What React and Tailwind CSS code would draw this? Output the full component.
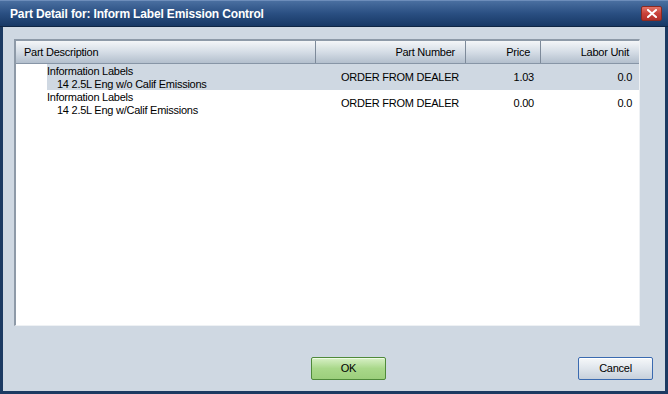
import React from "react";

const rows = [
  { title: "Information Labels", sub: "14 2.5L Eng w/o Calif Emissions", part: "ORDER FROM DEALER", price: "1.03", labor: "0.0", selected: true },
  { title: "Information Labels", sub: "14 2.5L Eng w/Calif Emissions", part: "ORDER FROM DEALER", price: "0.00", labor: "0.0", selected: false },
];

const App = () => {
  return (
    <div className="w-[668px] h-[394px] flex flex-col bg-[#1c3a62] text-[11px] tracking-[-0.25px] text-black" style={{ fontFamily: '"Liberation Sans", Arial, sans-serif' }}>
      {/* Title bar */}
      <div className="h-[27px] flex items-center justify-between pl-[10px] pr-[6px] bg-gradient-to-b from-[#4a6fa0] via-[#2a4f82] to-[#173865] border-t border-[#6d8dba] border-b border-b-[#0f2544]">
        <span className="text-white font-bold text-[12px] tracking-[-0.15px]">Part Detail for: Inform Label Emission Control</span>
        <div className="w-[21px] h-[15px] mt-[-1px] rounded-[2px] border border-[#8a2a22] bg-gradient-to-b from-[#e27468] via-[#c9423a] to-[#b3302a] flex items-center justify-center">
          <svg width="10" height="9" viewBox="0 0 10 9">
            <path d="M1 1 L9 8 M9 1 L1 8" stroke="white" strokeWidth="2" strokeLinecap="square" />
          </svg>
        </div>
      </div>

      {/* Body */}
      <div className="flex-1 mx-[3px] mb-[3px] bg-[#cfd8e2] flex flex-col px-[11px] pt-[12px]">
        {/* List */}
        <div className="w-[626px] h-[287px] bg-white border-t-2 border-l-2 border-[#8e9aa8] border-b border-r border-b-[#eef1f4] border-r-[#eef1f4] flex flex-col">
          {/* Header */}
          <div className="h-[23px] flex bg-gradient-to-b from-[#f4f6f8] via-[#d5dde6] to-[#b3bfcd] border-b border-[#8795a6]">
            <div className="w-[300px] flex items-center pl-[8px] border-r border-[#7d8a9a]">Part Description</div>
            <div className="w-[150px] flex items-center justify-end pr-[10px] border-r border-[#7d8a9a]">Part Number</div>
            <div className="w-[75px] flex items-center justify-end pr-[10px] border-r border-[#7d8a9a]">Price</div>
            <div className="flex-1 flex items-center justify-end pr-[10px]">Labor Unit</div>
          </div>
          {/* Rows */}
          {rows.map((r, i) => (
            <div key={i} className="h-[26px] flex">
              <div className="w-[31px]" />
              <div className={`flex-1 flex ${r.selected ? "bg-[#cfd8e2]" : ""}`}>
                <div className="w-[269px] flex flex-col justify-center leading-[13px] pt-[1px]">
                  <span>{r.title}</span>
                  <span className="pl-[10px]">{r.sub}</span>
                </div>
                <div className="w-[150px] flex items-center justify-end pr-[7px]">{r.part}</div>
                <div className="w-[75px] flex items-center justify-end pr-[7px]">{r.price}</div>
                <div className="flex-1 flex items-center justify-end pr-[7px]">{r.labor}</div>
              </div>
            </div>
          ))}
        </div>

        {/* Buttons */}
        <div className="flex-1 flex items-start justify-between pl-[297px] pr-[1px] pt-[31px]">
          <button className="w-[75px] h-[23px] border border-[#4f8a3a] rounded-[2px] bg-gradient-to-b from-[#d8f0c6] via-[#a9d88a] to-[#9ccf7c] shadow-[inset_0_1px_0_#eefbe4]">OK</button>
          <button className="w-[75px] h-[23px] border border-[#3a6ab0] rounded-[2px] bg-gradient-to-b from-[#f6f8fa] via-[#dfe5ec] to-[#c7d0db] shadow-[inset_0_1px_0_#ffffff]">Cancel</button>
        </div>
      </div>
    </div>
  );
};

export default App;
